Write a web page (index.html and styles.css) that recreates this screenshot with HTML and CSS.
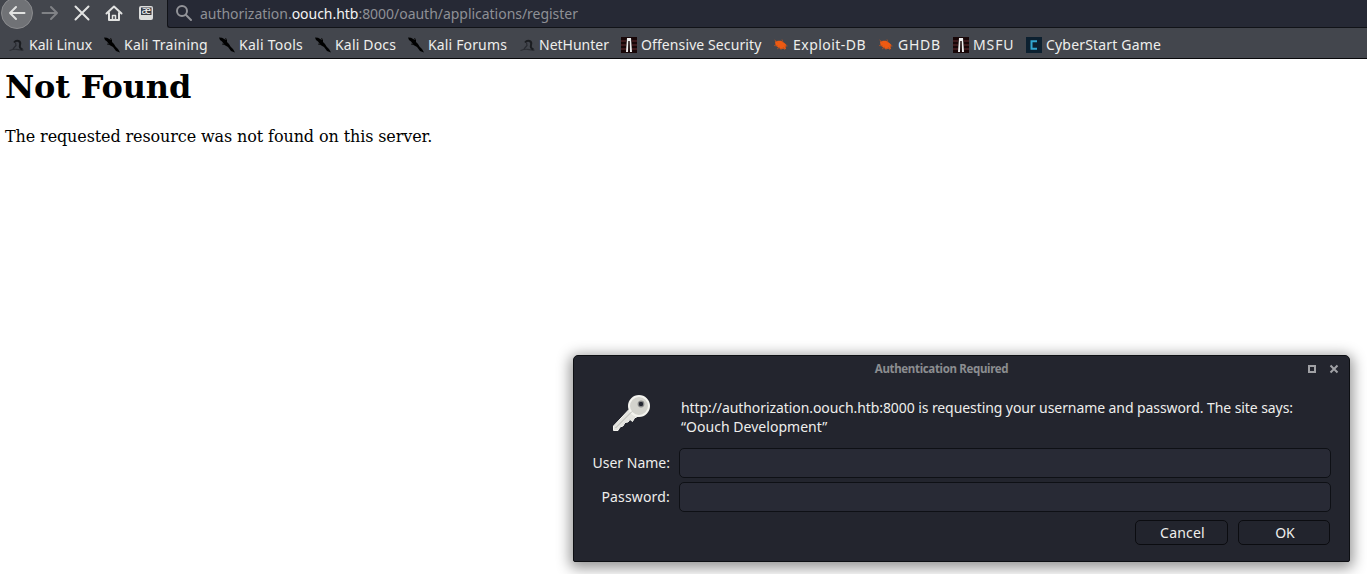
FILE: index.html
```html
<!DOCTYPE html>
<html lang="en">
<head>
<meta charset="utf-8">
<title>Not Found</title>
<link rel="stylesheet" href="styles.css">
</head>
<body>
<svg width="0" height="0" class="defs">
  <defs>
    <symbol id="kali" viewBox="0 0 16 16"><path d="M0.500 13.500q4-1.500 7-1.200t7 .9" fill="none" stroke="#2c2e33" stroke-width="1.200"/><path d="M5 5.500Q7 3 9.500 4T11 8t2.500 4.500" fill="none" stroke="#1b1d21" stroke-width="2"/><path d="M6.500 5.500L7 8.500 4 12" fill="none" stroke="#2a2c32" stroke-width="1.200"/></symbol>
    <symbol id="dragon" viewBox="0 0 16 16"><path d="M0 .5l3 .3 3 1.700 2 .5v2l2 2 1.500 2.500L14 12l2 3.500-4-1.500-3-4-3.500-2L3 4.500 1 3z" fill="#000"/><path d="M3 7l2 .5M6 1.500l2 1" stroke="#111" stroke-width="1"/></symbol>
    <symbol id="offsec" viewBox="0 0 16 16"><path d="M0 0h16v16H0z" fill="#180708"/><path d="M0 4h5M0 8h5M0 12h5M11 4h5M11 8h5M11 12h5" stroke="#492023" stroke-width="1.500"/><path d="M6 1h4l1 14H9L8.700 4H7.300L7 15H5z" fill="#eee"/></symbol>
    <symbol id="bug" viewBox="0 0 16 16"><path d="M2 4.500l3-.8 3 0 3.500 2.300L13.500 8l-1 2 .5 2-3-.3-2.500.2-3-2-2-2z" fill="#ee5a12"/><path d="M1 8.500l4 .5M4 12l3-2M1.500 3l3 2M9 2.500l1 3M12 13l-2-3M14.500 9l-3 0M8 13V11" stroke="#b9501f" stroke-width=".8"/></symbol>
    <symbol id="cyber" viewBox="0 0 16 16"><path d="M0 0h16v16H0z" fill="#0c2030"/><path d="M11 4.200H5.500v7.600H11" fill="none" stroke="#32a6cf" stroke-width="2"/></symbol>
  </defs>
</svg>
<header class="chrome">
  <div class="toolbar">
    <div class="back"><svg width="18" height="16" viewBox="0 0 18 16"><path d="M16.500 8H2M8 2L2 8l6 6" class="line light"/></svg></div>
    <svg class="tool" width="18" height="16" viewBox="0 0 18 16"><path d="M1.500 8H16M10 2l6 6-6 6" class="line dim"/></svg>
    <svg class="tool" width="18" height="16" viewBox="0 0 18 16"><path d="M2.500 1.500l13 13M15.500 1.500l-13 13" class="line light"/></svg>
    <svg class="tool" width="18" height="16" viewBox="0 0 18 16"><path d="M1.500 8.500L9 1.500l7.500 7M4 8v7h10V8" class="line light"/><path d="M7.500 15v-4.500h3V15" class="line light thin"/></svg>
    <svg class="tool" width="18" height="16" viewBox="0 0 18 16"><rect x="2" y="1" width="14" height="14" rx="2" fill="#dcdddc"/><rect x="4" y="2.500" width="10.500" height="7.500" fill="#383b42"/><text x="9.200" y="9" class="ae">æ</text></svg>
    <div class="urlbar">
      <svg width="18" height="18" viewBox="0 0 18 18"><circle cx="7" cy="7" r="5" class="line grey"/><path d="M10.800 10.800l5.200 5.200" class="line grey"/></svg>
      <span class="url">authorization.<b>oouch.htb</b>:8000/oauth/applications/register</span>
    </div>
  </div>
  <nav class="bookmarks">
    <a><svg><use href="#kali"/></svg><span>Kali Linux</span></a>
    <a class="training"><svg><use href="#dragon"/></svg><span>Kali Training</span></a>
    <a class="tools"><svg><use href="#dragon"/></svg><span>Kali Tools</span></a>
    <a class="docs"><svg><use href="#dragon"/></svg><span>Kali Docs</span></a>
    <a class="forums"><svg><use href="#dragon"/></svg><span>Kali Forums</span></a>
    <a class="nethunter"><svg><use href="#kali"/></svg><span>NetHunter</span></a>
    <a class="offsec"><svg><use href="#offsec"/></svg><span>Offensive Security</span></a>
    <a class="exploit"><svg><use href="#bug"/></svg><span>Exploit-DB</span></a>
    <a class="ghdb"><svg><use href="#bug"/></svg><span>GHDB</span></a>
    <a class="msfu"><svg><use href="#offsec"/></svg><span>MSFU</span></a>
    <a class="cyber"><svg><use href="#cyber"/></svg><span>CyberStart Game</span></a>
  </nav>
</header>
<main class="page">
  <h1>Not Found</h1>
  <p>The requested resource was not found on this server.</p>
</main>
<section class="dialog">
  <div class="titlebar"><span class="title">Authentication Required</span>
    <svg class="controls" width="32" height="10" viewBox="0 0 32 10"><rect x="2" y="2" width="6" height="6"/><path d="M23.500 1.500l7 7M30.500 1.500l-7 7"/></svg>
  </div>
  <div class="message">
    <svg width="40" height="40" viewBox="0 0 40 40"><path d="M18 15.500L2.500 32v4.500H7l2-3.500 3-1 2-3.500 3-.5 2-2.500 2.500 2 2-3.500 4-2z" fill="#e4e4df" stroke="#f6f6f1"/><circle cx="28" cy="12" r="10" fill="#d3d3cd" stroke="#f4f4ef" stroke-width="2"/><path d="M4.500 34L21 17.500" stroke="#b5b6b0"/><circle cx="30" cy="10" r="2.800" fill="#242731" stroke="#898a89" stroke-width="1.200"/></svg>
    <p>http://authorization.oouch.htb:8000 is requesting your username and password. The site says:<br><span class="realm">“Oouch Development”</span></p>
  </div>
  <div class="form">
    <label>User Name:</label><div class="field"></div>
    <label class="password">Password:</label><div class="field"></div>
  </div>
  <div class="actions"><button class="cancel">Cancel</button><button class="ok">OK</button></div>
</section>
</body>
</html>
```
FILE: styles.css
```css
* { box-sizing: border-box; }
body { margin: 0; height: 574px; overflow: hidden; background: #fff; font-family: "Noto Sans", sans-serif; font-size: 14px; color: #eeeeec; }
.defs { position: absolute; }
.chrome { height: 59px; background: #43464d; border-bottom: 1px solid #08080a; }
.toolbar { height: 28px; display: flex; align-items: flex-start; }
.back { width: 32px; height: 32px; margin: -3px 8px 0 1px; border-radius: 50%; background: #707276; border: 1px solid #8a8b8e; display: flex; align-items: center; justify-content: center; flex: none; }
.tool { margin: 5px 14px 0 0; flex: none; }
.line { fill: none; stroke-width: 2; stroke-linecap: round; stroke-linejoin: round; }
.light { stroke: #e2e3e2; }
.dim { stroke: #808286; }
.grey { stroke: #929398; }
.thin { stroke-width: 1.5; }
.ae { font-size: 11px; fill: #eee; text-anchor: middle; }
.urlbar { flex: 1; height: 28px; margin-left: -2px; display: flex; gap: 7px; padding: 4px 0 0 7px; background: #262935; border-left: 1px solid #111318; border-bottom: 1px solid #111318; border-radius: 0 0 0 3px; }
.url { color: #8e9095; line-height: 19px; white-space: nowrap; letter-spacing: -.03px; }
.url b { font-weight: 400; color: #f4f4f4; }
.bookmarks { display: flex; padding: 9px 0 0 9px; height: 30px; }
.bookmarks a { width: 95px; flex: none; display: flex; gap: 4px; line-height: 16px; white-space: nowrap; }
.bookmarks svg { width: 16px; height: 16px; flex: none; }
.bookmarks .training { width: 115px; letter-spacing: .23px; }
.bookmarks .tools { width: 96px; letter-spacing: .25px; }
.bookmarks .docs { width: 93px; letter-spacing: .18px; }
.bookmarks .forums { width: 112px; letter-spacing: .15px; }
.bookmarks .nethunter { width: 101px; gap: 3px; }
.bookmarks .offsec { width: 152px; letter-spacing: .1px; }
.bookmarks .exploit { width: 105px; letter-spacing: .47px; }
.bookmarks .ghdb { width: 75px; letter-spacing: .75px; }
.bookmarks .msfu { width: 73px; letter-spacing: .9px; }
.bookmarks .cyber { width: 150px; letter-spacing: .18px; }
.page { padding: 9px 5px; font-family: "DejaVu Serif", serif; font-size: 16px; color: #000; }
.page h1 { margin: 0; font-size: 32px; line-height: 38px; letter-spacing: -.18px; }
.page p { margin: 21px 0 0; line-height: 19px; letter-spacing: -.11px; }
.dialog { position: absolute; left: 573px; top: 355px; width: 777px; height: 207px; background: #23252e; border: 1px solid #0d0f13; border-radius: 5px 5px 2px 2px; box-shadow: 0 3px 14px 3px rgba(0,0,0,.42); }
.titlebar { display: grid; grid-template-columns: 1fr auto; height: 26px; align-items: center; padding-right: 10px; }
.title { text-align: center; padding: 0 0 1px 2px; font-size: 11.5px; letter-spacing: -.34px; font-weight: 700; color: #8b8d90; }
.controls { fill: none; stroke: #a0a1a5; stroke-width: 2; }
.message { display: flex; height: 66px; padding: 12px 0 0 37px; }
.message svg { flex: none; }
.message p { margin: 4px 0 0 30px; line-height: 19px; white-space: nowrap; letter-spacing: -.08px; }
.message .realm { letter-spacing: .03px; }
.form { display: grid; grid-template-columns: 96px 652px; column-gap: 9px; row-gap: 4px; grid-auto-rows: 30px; }
.form label { text-align: right; line-height: 30px; }
.form .password { letter-spacing: .17px; }
.field { background: #282a35; border: 1px solid #0e1015; border-radius: 5px; }
.actions { display: flex; justify-content: flex-end; gap: 10px; padding: 8px 19px 0 0; }
button { width: 93px; height: 25px; padding: 0; font: inherit; color: inherit; background: #22242d; border: 1px solid #0b0c10; border-radius: 5px; line-height: 22px; }
.cancel { letter-spacing: .2px; padding-left: 2px; }
.ok { width: 92px; padding-left: 2px; }
```
